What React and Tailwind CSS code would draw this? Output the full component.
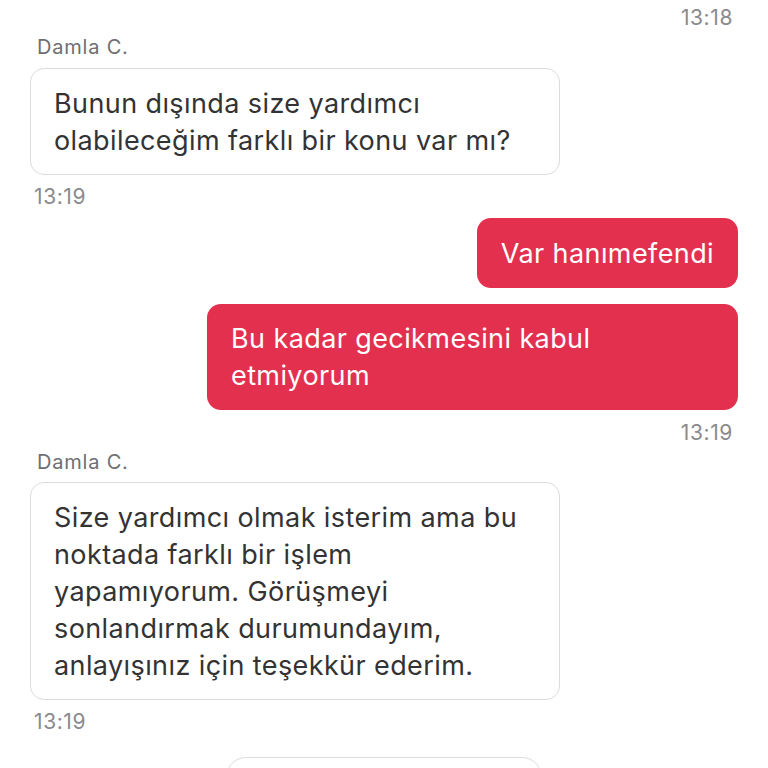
export default function App() {
  const font = { fontFamily: 'Inter, "Liberation Sans", sans-serif' };
  return (
    <div className="h-[768px] w-[768px] overflow-hidden bg-white" style={font}>
      <div className="flex flex-col pt-[6px]">
        <div className="self-end pr-[35px] text-[21px] leading-[24px] tracking-[0.6px] text-[#8a8a8e]">13:18</div>

        <div className="mt-[5px] pl-[37px] text-[20px] leading-[24px] tracking-[0.8px] text-[#6e6e73]">Damla C.</div>
        <div className="ml-[30px] mt-[9px] w-[530px] rounded-[14px] border border-[#dcdcdc] pl-[23px] pr-4 pt-4 pb-[15px] text-[27px] leading-[37px] tracking-[0.4px] text-[#333333]">
          Bunun dışında size yardımcı
          <br />
          olabileceğim farklı bir konu var mı?
        </div>
        <div className="mt-[10px] pl-[34px] text-[21px] leading-[24px] tracking-[0.6px] text-[#8a8a8e]">13:19</div>

        <div className="mr-[30px] mt-[9px] self-end rounded-[14px] bg-[#e3304f] px-6 pt-[17px] pb-4 text-[27px] leading-[37px] tracking-[0.4px] text-white">
          Var hanımefendi
        </div>
        <div className="mr-[30px] mt-4 w-[531px] self-end rounded-[14px] bg-[#e3304f] px-6 py-4 text-[27px] leading-[37px] tracking-[0.4px] text-white">
          Bu kadar gecikmesini kabul
          <br />
          etmiyorum
        </div>
        <div className="mt-[11px] self-end pr-[35px] text-[21px] leading-[24px] tracking-[0.6px] text-[#8a8a8e]">13:19</div>

        <div className="mt-[5px] pl-[37px] text-[20px] leading-[24px] tracking-[0.8px] text-[#6e6e73]">Damla C.</div>
        <div className="ml-[30px] mt-2 w-[530px] rounded-[14px] border border-[#dcdcdc] pl-[23px] pr-4 pt-4 pb-[15px] text-[27px] leading-[37px] tracking-[0.4px] text-[#333333]">
          Size yardımcı olmak isterim ama bu
          <br />
          noktada farklı bir işlem
          <br />
          yapamıyorum. Görüşmeyi
          <br />
          sonlandırmak durumundayım,
          <br />
          anlayışınız için teşekkür ederim.
        </div>
        <div className="mt-[10px] pl-[34px] text-[21px] leading-[24px] tracking-[0.6px] text-[#8a8a8e]">13:19</div>

        <div className="ml-[226px] mt-[23px] h-[60px] w-[316px] rounded-[20px] border border-[#dcdcdc]"></div>
      </div>
    </div>
  );
}
